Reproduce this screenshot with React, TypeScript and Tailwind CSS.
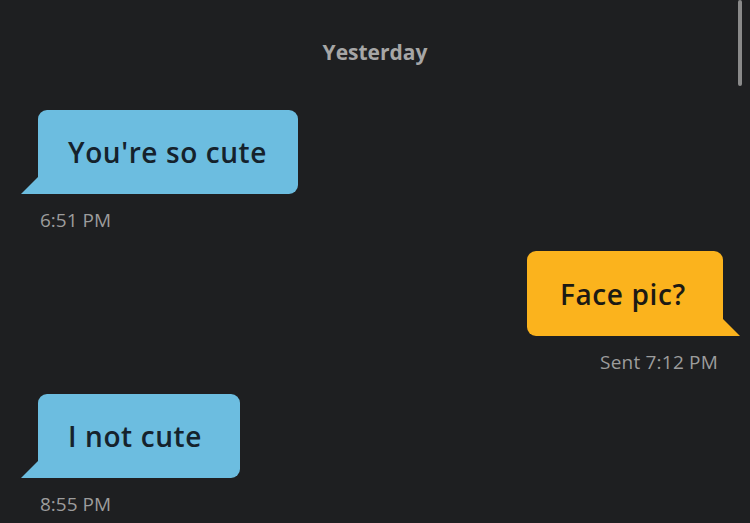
import React from "react";

const font = { fontFamily: "'Open Sans', 'Noto Sans', sans-serif" };

function Received({ text, time, w }: { text: string; time: string; w: string }) {
    return (
        <div className="flex flex-col items-start pl-[38px]">
            <div className="relative">
                <div className={`h-[84px] flex items-center pl-[30px] bg-[#6cbde0] rounded-[9px] rounded-bl-none text-[28px] font-semibold text-[#15222c] tracking-[0.6px] ${w}`}>
                    {text}
                </div>
                <svg className="absolute left-[-17px] bottom-0" width="18" height="18" viewBox="0 0 18 18">
                    <polygon points="18,0 0,18 18,18" fill="#6cbde0" />
                </svg>
            </div>
            <p className="mt-[12px] ml-[2px] text-[19px] text-[#9c9c9c]">{time}</p>
        </div>
    );
}

function Sent({ text, time }: { text: string; time: string }) {
    return (
        <div className="flex flex-col items-end pr-[27px]">
            <div className="relative">
                <div className="h-[85px] w-[196px] flex items-center pl-[33px] bg-[#fbb31d] rounded-[9px] rounded-br-none text-[28px] font-semibold text-[#1c1a14] tracking-[0.6px]">
                    {text}
                </div>
                <svg className="absolute right-[-17px] bottom-0" width="18" height="18" viewBox="0 0 18 18">
                    <polygon points="0,0 18,18 0,18" fill="#fbb31d" />
                </svg>
            </div>
            <p className="mt-[12px] mr-[5px] text-[19px] text-[#9c9c9c] tracking-[0.2px]">{time}</p>
        </div>
    );
}

export default function App() {
    return (
        <div className="relative w-[750px] h-[523px] bg-[#1e1f21] overflow-hidden" style={font}>
            <div className="absolute right-[8px] top-0 w-[4px] h-[86px] rounded-full bg-[#8a8a8a]" />
            <p className="pt-[37px] text-center text-[21px] font-bold text-[#a6a6a6]">Yesterday</p>
            <div className="mt-[41px]">
                <Received text="You're so cute" time="6:51 PM" w="w-[260px]" />
            </div>
            <div className="mt-[17px]">
                <Sent text="Face pic?" time="Sent 7:12 PM" />
            </div>
            <div className="mt-[17px]">
                <Received text="I not cute" time="8:55 PM" w="w-[202px]" />
            </div>
        </div>
    );
}
